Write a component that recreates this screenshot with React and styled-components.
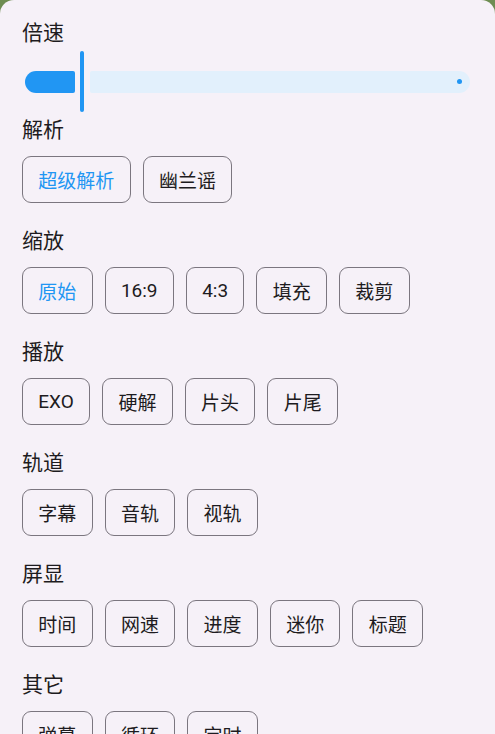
import React from 'react';
import styled, { createGlobalStyle } from 'styled-components';

const GlobalStyle = createGlobalStyle`
    html, body {
        margin: 0;
        padding: 0;
        background: #6e8d52;
    }
    body {
        font-family: Roboto, "Noto Sans CJK SC", sans-serif;
        -webkit-font-smoothing: antialiased;
    }
`;

const Sheet = styled.div`
    box-sizing: border-box;
    width: 495px;
    height: 734px;
    padding: 19px 0 0 22px;
    background: #f6f1f8;
    border-radius: 14px 14px 0 0;
    display: flex;
    flex-direction: column;
    overflow: hidden;
`;

const Section = styled.div`
    display: flex;
    flex-direction: column;
    flex-shrink: 0;
`;

const Label = styled.div`
    height: 28px;
    line-height: 28px;
    font-size: 21px;
    color: #1d1b20;
`;

const SliderBox = styled.div`
    height: 69px;
    display: flex;
    align-items: center;
    padding: 0 25px 0 3px;
`;

const ActiveTrack = styled.div`
    width: ${p => p.$width}px;
    height: 22px;
    background: #2196f3;
    border-radius: 11px 2px 2px 11px;
`;

const Handle = styled.div`
    width: 4px;
    height: 61px;
    margin: 0 6px 0 5px;
    background: #2196f3;
    border-radius: 2px;
`;

const InactiveTrack = styled.div`
    flex: 1;
    height: 22px;
    background: #e2f0fc;
    border-radius: 2px 11px 11px 2px;
    display: flex;
    align-items: center;
    justify-content: flex-end;
    padding-right: 8px;
`;

const Dot = styled.div`
    width: 5px;
    height: 5px;
    border-radius: 50%;
    background: #2196f3;
`;

const ChipRow = styled.div`
    display: flex;
    gap: 12px;
    margin: 12px 0 24px;
`;

const Chip = styled.div`
    box-sizing: border-box;
    height: 47px;
    padding: 0 15.3px;
    display: flex;
    align-items: center;
    border: 1px solid #7b767f;
    border-radius: 9px;
    font-size: 19px;
    color: ${p => (p.$active ? '#2196f3' : '#1d1b20')};
    white-space: nowrap;
`;

const sections = [
    { title: '解析', items: ['超级解析', '幽兰谣'], active: 0 },
    { title: '缩放', items: ['原始', '16:9', '4:3', '填充', '裁剪'], active: 0 },
    { title: '播放', items: ['EXO', '硬解', '片头', '片尾'] },
    { title: '轨道', items: ['字幕', '音轨', '视轨'] },
    { title: '屏显', items: ['时间', '网速', '进度', '迷你', '标题'] },
    { title: '其它', items: ['弹幕', '循环', '定时'] },
];

const App = () => {
    return (
        <>
            <GlobalStyle />
            <Sheet>
                <Section>
                    <Label>倍速</Label>
                    <SliderBox>
                        <ActiveTrack $width={50} />
                        <Handle />
                        <InactiveTrack>
                            <Dot />
                        </InactiveTrack>
                    </SliderBox>
                </Section>
                {sections.map(section => (
                    <Section key={section.title}>
                        <Label>{section.title}</Label>
                        <ChipRow>
                            {section.items.map((item, index) => (
                                <Chip key={item} $active={section.active === index}>{item}</Chip>
                            ))}
                        </ChipRow>
                    </Section>
                ))}
            </Sheet>
        </>
    );
};

export default App;
